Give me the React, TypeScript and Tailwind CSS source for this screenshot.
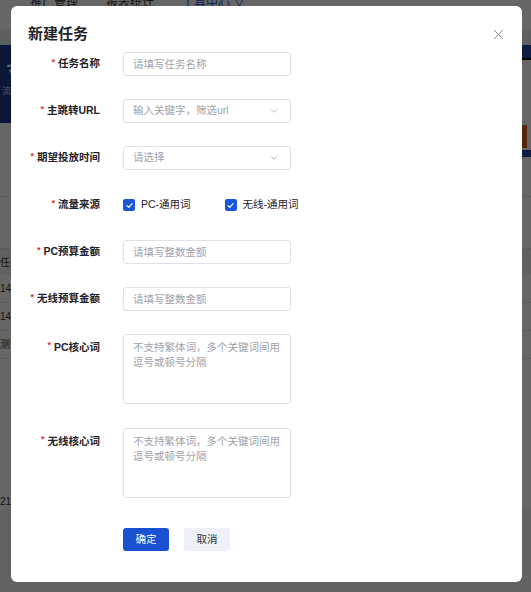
import { ChevronDown, X } from "lucide-react";

const font = { fontFamily: '"Liberation Sans", "Noto Sans CJK SC", sans-serif' };

function Label({ text, top = false }: { text: string; top?: boolean }) {
  return (
    <div
      className={`flex w-[89px] shrink-0 justify-end text-[10.5px] font-semibold text-[#1f2329] ${
        top ? "items-start pt-[6px]" : "items-center"
      }`}
    >
      <span className="mr-[3px] -translate-y-[1px] text-[9px] text-[#e5322d]">*</span>
      <span>{text}</span>
    </div>
  );
}

function Check({ text }: { text: string }) {
  return (
    <label className="flex items-center gap-[6px] text-[10.5px] text-[#1f2329]">
      <span className="flex h-[12px] w-[12px] items-center justify-center rounded-[2px] bg-[#1a56db]">
        <svg viewBox="0 0 12 12" className="h-[9px] w-[9px]" fill="none">
          <path d="M2.5 6.2 5 8.5 9.5 3.5" stroke="white" strokeWidth="1.6" strokeLinecap="round" strokeLinejoin="round" />
        </svg>
      </span>
      {text}
    </label>
  );
}

function TextBox({ placeholder }: { placeholder: string }) {
  return (
    <input
      placeholder={placeholder}
      className="h-[24px] w-[168px] rounded-[3px] border border-[#dde1ea] px-[9px] text-[10.5px] outline-none placeholder:text-[#9ea2ab]"
    />
  );
}

function SelectBox({ placeholder }: { placeholder: string }) {
  return (
    <div className="flex h-[24px] w-[168px] items-center justify-between rounded-[3px] border border-[#dde1ea] pl-[9px] pr-[11px] text-[10.5px] text-[#9ea2ab]">
      <span>{placeholder}</span>
      <ChevronDown className="h-[10px] w-[10px] text-[#8a8f99]" strokeWidth={1.6} />
    </div>
  );
}

function Area() {
  return (
    <textarea
      placeholder={"不支持繁体词，多个关键词间用\n逗号或顿号分隔"}
      className="h-[70px] w-[168px] resize-none rounded-[3px] border border-[#dde1ea] px-[9px] py-[5px] text-[10.5px] leading-[15px] outline-none placeholder:text-[#9ea2ab]"
    />
  );
}

export default function App() {
  return (
    <div className="relative h-[592px] w-[531px] overflow-hidden bg-[#f4f5f8]" style={font}>
      {/* page behind the dialog */}
      <div className="flex h-[30px] items-start gap-[28px] bg-white pl-[30px] text-[12px] leading-[14px] text-[#333]">
        <span className="-mt-[4px]">推广管理</span>
        <span className="-mt-[4px]">报表统计</span>
        <span className="-mt-[4px] text-[#1a56db]">工具中心 ∨</span>
      </div>
      <div className="h-[15px] bg-[#eceef2]" />
      <div className="flex h-[78px]">
        <div className="flex w-[300px] flex-col bg-[#1b3a8c] pl-[2px] pt-[14px] text-white">
          <span className="text-[26px] italic leading-none">寸</span>
          <span className="text-[9px] text-[#c8d3f0]">流</span>
        </div>
        <div className="flex-1 bg-white">
          <div className="h-[15px] border-b-2 border-black bg-[#2748a8]" />
        </div>
      </div>
      <div className="flex justify-end bg-white pr-[4px] pt-[2px]">
        <div className="h-[23px] w-[30px] bg-[#d2601c]" />
      </div>
      <div className="flex justify-end bg-white">
        <div className="mt-[2px] h-[7px] w-[30px] bg-[#2748a8]" />
      </div>
      <div className="bg-white">
        <div className="h-[40px] border-b border-[#e5e7eb]" />
        <div className="h-[52px] border-b border-[#e5e7eb]" />
        <div className="flex h-[26px] items-center bg-[#f2f3f5] text-[10px] text-[#333]">任务</div>
        <div className="flex h-[28px] items-center border-b border-[#e5e7eb] text-[10px] text-[#333]">14点</div>
        <div className="flex h-[28px] items-center border-b border-[#e5e7eb] text-[10px] text-[#333]">14点</div>
        <div className="flex h-[28px] items-center border-b border-[#e5e7eb] text-[10px] text-[#333]">测试</div>
        <div className="flex h-[150px] items-end text-[10px] text-[#333]">21</div>
      </div>

      <div className="absolute inset-0 bg-black/60" />

      {/* dialog */}
      <div className="absolute left-[11px] top-[6px] h-[576px] w-[511px] rounded-[6px] bg-white">
        <div className="flex items-center justify-between pl-[17px] pr-[15px] pt-[18px]">
          <h2 className="text-[15px] font-semibold leading-[20px] text-[#1f2329]">新建任务</h2>
          <X className="h-[17px] w-[17px] text-[#7d828c]" strokeWidth={1.3} />
        </div>

        <div className="mt-[8px] flex flex-col gap-[23px]">
          <div className="flex gap-[23px]">
            <Label text="任务名称" />
            <TextBox placeholder="请填写任务名称" />
          </div>
          <div className="flex gap-[23px]">
            <Label text="主跳转URL" />
            <SelectBox placeholder="输入关键字，筛选url" />
          </div>
          <div className="flex gap-[23px]">
            <Label text="期望投放时间" />
            <SelectBox placeholder="请选择" />
          </div>
          <div className="flex h-[24px] gap-[23px]">
            <Label text="流量来源" />
            <div className="flex items-center gap-[34px]">
              <Check text="PC-通用词" />
              <Check text="无线-通用词" />
            </div>
          </div>
          <div className="flex gap-[23px]">
            <Label text="PC预算金额" />
            <TextBox placeholder="请填写整数金额" />
          </div>
          <div className="flex gap-[23px]">
            <Label text="无线预算金额" />
            <TextBox placeholder="请填写整数金额" />
          </div>
          <div className="flex gap-[23px]">
            <Label text="PC核心词" top />
            <Area />
          </div>
          <div className="mt-[1px] flex gap-[23px]">
            <Label text="无线核心词" top />
            <Area />
          </div>
          <div className="mt-[7px] flex gap-[15px] pl-[112px]">
            <button className="h-[23px] w-[46px] rounded-[3px] bg-[#1a50d2] text-[10.5px] text-white">确定</button>
            <button className="h-[23px] w-[46px] rounded-[3px] bg-[#edf0f7] text-[10.5px] text-[#333]">取消</button>
          </div>
        </div>
      </div>
    </div>
  );
}
